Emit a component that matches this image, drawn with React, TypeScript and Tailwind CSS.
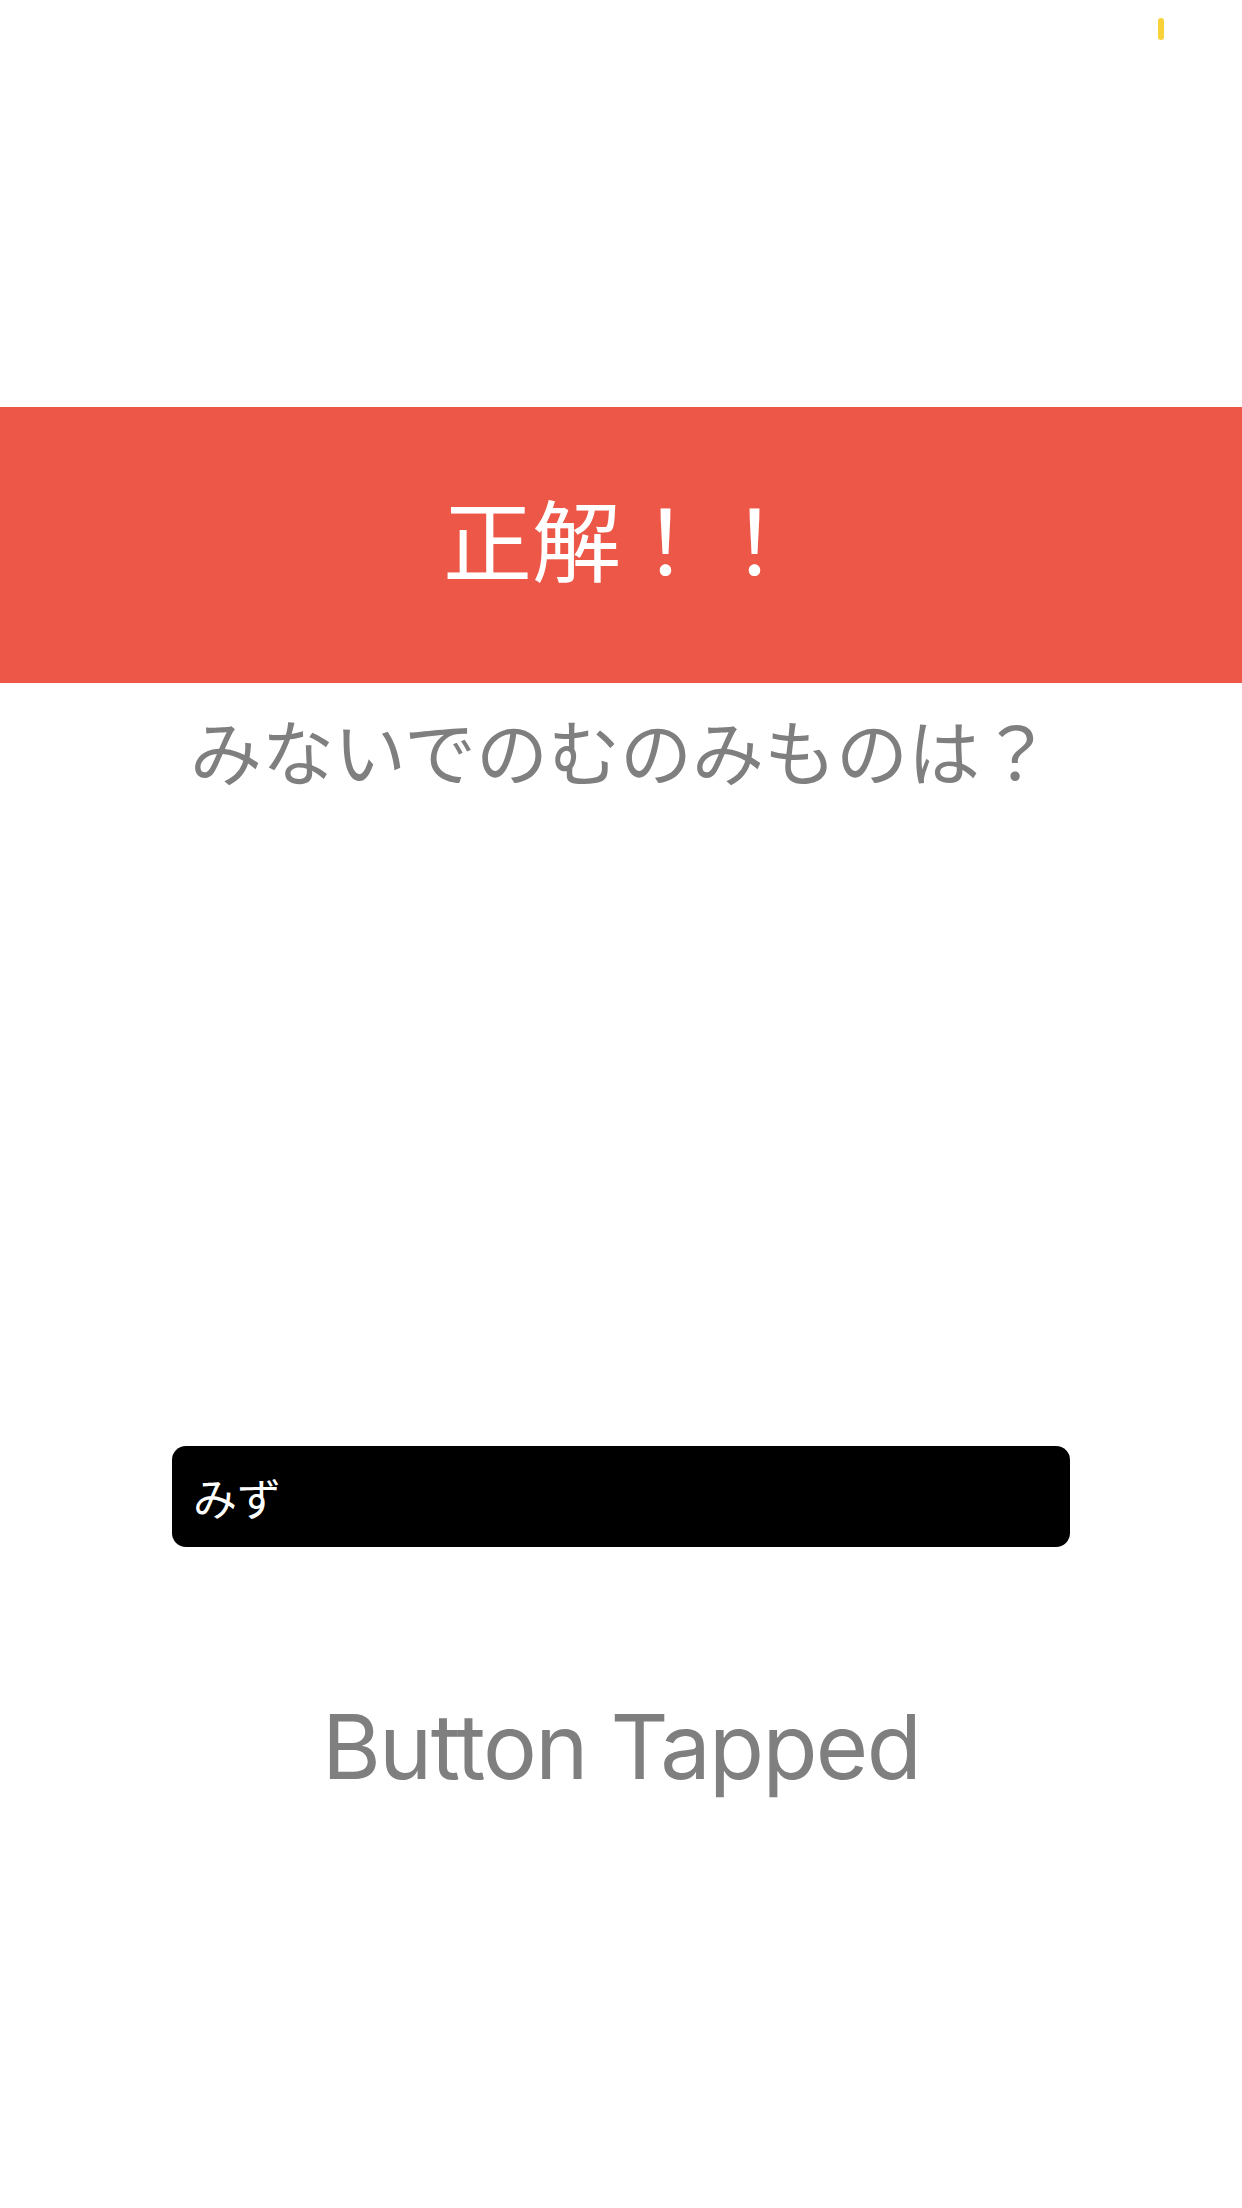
import React from "react";

export default function App() {
  const jp = { fontFamily: '"Noto Sans CJK JP", "Noto Sans", sans-serif' };
  return (
    <div className="w-[1242px] h-[2208px] bg-white flex flex-col overflow-hidden">
      <div className="relative h-[407px] shrink-0">
        <div className="absolute left-[1158px] top-[18px] w-[6px] h-[22px] rounded-full bg-[#f9d23a]" />
      </div>
      <div
        className="h-[276px] shrink-0 bg-[#ec5747] flex items-center justify-center pb-[18px] text-white text-[89px] leading-none"
        style={jp}
      >
        正解！！
      </div>
      <div
        className="h-[140px] shrink-0 flex items-center justify-center pb-[8px] text-[#7f7f7f] text-[72px] leading-none"
        style={jp}
      >
        みないでのむのみものは？
      </div>
      <div className="h-[623px] shrink-0" />
      <div className="mx-[172px] h-[101px] shrink-0 bg-black rounded-[14px] flex items-center px-[21px]">
        <span className="text-white text-[44px] leading-none" style={jp}>
          みず
        </span>
      </div>
      <div className="h-[155px] shrink-0" />
      <div
        className="flex justify-center text-[#7f7f7f] text-[90px] leading-none tracking-[-1.7px]"
        style={{ fontFamily: 'Inter, "Liberation Sans", sans-serif' }}
      >
        Button Tapped
      </div>
    </div>
  );
}
